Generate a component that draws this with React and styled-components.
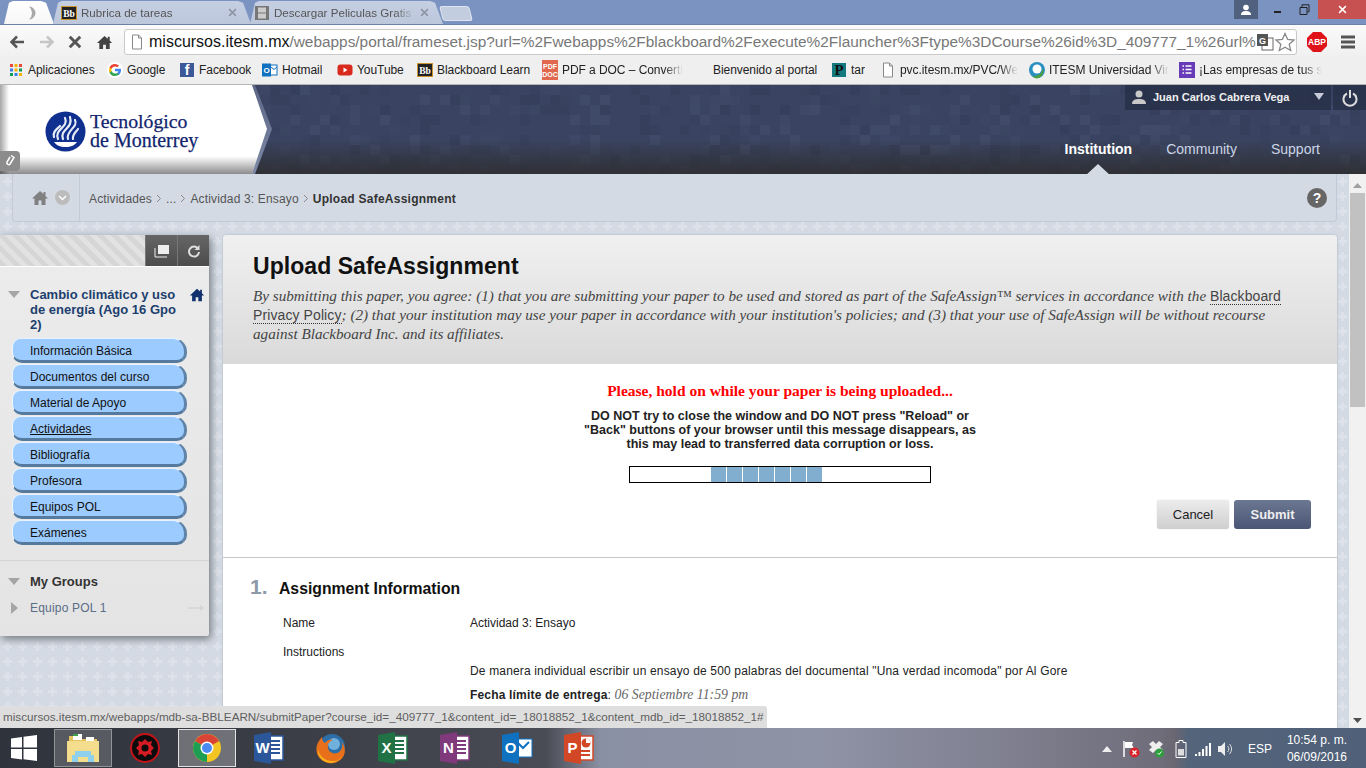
import React from "react";
import styled, { createGlobalStyle } from "styled-components";

const plusTile = (color) =>
  `url("data:image/svg+xml,%3Csvg xmlns='http://www.w3.org/2000/svg' width='15' height='15'%3E%3Cpath d='M6 3h3v3h3v3H9v3H6V9H3V6h3z' fill='${color}'/%3E%3C/svg%3E")`;

const GlobalStyle = createGlobalStyle`
  html, body {
    margin: 0;
    padding: 0;
    height: 100%;
    overflow: hidden;
    background: #d3dae4;
  }
  body, button {
    font-family: "Liberation Sans", Arial, sans-serif;
  }
  * {
    box-sizing: border-box;
  }
  svg {
    flex: none;
  }
`;

const Screen = styled.div`
  width: 1366px;
  height: 768px;
  display: flex;
  flex-direction: column;
  position: relative;
  overflow: hidden;
`;

/* ---------- browser chrome ---------- */

const TabStrip = styled.div`
  height: 25px;
  background: #7b93c1;
  display: flex;
  align-items: flex-end;
  padding-left: 4px;
  border-bottom: 1px solid #6c7fa6;
  flex: none;
`;

const Tab = styled.div`
  height: 23px;
  width: ${(p) => p.$w}px;
  flex: none;
  display: flex;
  align-items: center;
  gap: 4px;
  padding-left: ${(p) => p.$pad}px;
  padding-right: ${(p) => (p.$active ? 0 : 14)}px;
  background: ${(p) => (p.$active ? "linear-gradient(#fff,#f6f6f6)" : "linear-gradient(#c6cfe2,#bcc7dc)")};
  clip-path: polygon(0 100%, 5px 8%, 9px 0, calc(100% - 13px) 0, calc(100% - 8px) 8%, 100% 100%);
  font-size: 11.6px;
  color: #555;
  margin-right: -1px;
  white-space: nowrap;
  overflow: hidden;
`;

const TabTitle = styled.span`
  flex: 1;
  overflow: hidden;
  -webkit-mask-image: linear-gradient(90deg, #000 85%, transparent);
  mask-image: linear-gradient(90deg, #000 85%, transparent);
`;

const TabClose = styled.span`
  display: flex;
  flex: none;
`;

const NewTab = styled.div`
  width: 30px;
  height: 15px;
  margin: 0 0 3px -1px;
  background: #c3cde0;
  border: 1px solid #dfe5f0;
  border-radius: 3px;
  transform: skewX(14deg);
`;

const WindowControls = styled.div`
  margin-left: auto;
  align-self: flex-start;
  display: flex;
  height: 19px;
`;

const WinButton = styled.div`
  width: ${(p) => p.$w}px;
  height: 19px;
  display: flex;
  align-items: center;
  justify-content: center;
  background: ${(p) => p.$bg || "transparent"};
  margin-right: ${(p) => p.$mr || 0}px;
`;

const Toolbar = styled.div`
  height: 32px;
  flex: none;
  background: linear-gradient(#fafafa, #f0f0f0);
  display: flex;
  align-items: center;
  padding: 2px 0 0 9px;
`;

const NavIcon = styled.div`
  width: ${(p) => p.$w}px;
  flex: none;
  display: flex;
  justify-content: flex-start;
  align-items: center;
`;

const AddressBar = styled.div`
  width: 1173px;
  height: 26px;
  background: #fff;
  border: 1px solid #c9c9c9;
  border-radius: 3px;
  display: flex;
  align-items: center;
  padding-left: 5px;
  flex: none;
  overflow: hidden;
`;

const Url = styled.div`
  flex: 1;
  margin-left: 5px;
  font-size: 15.4px;
  color: #777;
  white-space: nowrap;
  overflow: hidden;
  b {
    color: #111;
    font-weight: normal;
    font-size: 16px;
  }
`;

const ToolRight = styled.div`
  display: flex;
  align-items: center;
  margin-left: 10px;
  gap: 14px;
`;

const Bookmarks = styled.div`
  height: 28px;
  flex: none;
  background: #efefef;
  border-bottom: 1px solid #b5b5b5;
  display: flex;
  align-items: center;
  padding: 0 0 1px 8px;
`;

const Bookmark = styled.div`
  width: ${(p) => p.$w}px;
  flex: none;
  display: flex;
  align-items: center;
  gap: 4px;
  font-size: 12px;
  letter-spacing: -0.06px;
  color: #222;
  white-space: nowrap;
  overflow: hidden;
  span {
    overflow: hidden;
    ${(p) => p.$fade && "-webkit-mask-image: linear-gradient(90deg, #000 85%, transparent); mask-image: linear-gradient(90deg, #000 85%, transparent);"}
  }
`;

const BookmarkIcon = styled.div`
  width: 16px;
  height: 20px;
  flex: none;
  display: flex;
  align-items: center;
  justify-content: center;
`;

/* ---------- site header ---------- */

const SiteHeader = styled.header`
  height: 89px;
  flex: none;
  position: relative;
  display: flex;
  background: #3a4462;
  overflow: hidden;
`;

const Mosaic = styled.svg`
  position: absolute;
  inset: 0;
`;

const HeaderShade = styled.div`
  position: absolute;
  inset: 0;
  background: linear-gradient(rgba(40, 40, 40, 0) 60%, rgba(45, 45, 45, 0.85) 100%);
`;

const LogoPanel = styled.div`
  width: 272px;
  flex: none;
  position: relative;
  background: linear-gradient(#5c6886, #7d88a6);
  clip-path: polygon(0 0, 255px 0, 272px 44px, 255px 89px, 0 89px);
`;

const LogoInner = styled.div`
  width: 268px;
  height: 100%;
  clip-path: polygon(0 0, 252px 0, 267px 44px, 252px 89px, 0 89px);
  display: flex;
  align-items: center;
  gap: 4px;
  padding: 3px 0 0 45px;
  background:
    linear-gradient(rgba(0, 0, 0, 0) 80%, rgba(0, 0, 0, 0.45) 100%),
    linear-gradient(90deg, rgba(0, 0, 0, 0.35), rgba(0, 0, 0, 0) 9px),
    #fff;
`;

const LogoText = styled.div`
  font-family: "Liberation Serif", serif;
  color: #10246e;
  font-size: 19.8px;
  line-height: 19px;
  -webkit-text-stroke: 0.25px #10246e;
  div + div {
    font-size: 20px;
  }
`;

const LinkBadge = styled.div`
  position: absolute;
  left: 0;
  bottom: 3px;
  width: 20px;
  height: 20px;
  background: #8c8c8c;
  border-radius: 0 4px 4px 0;
  display: flex;
  align-items: center;
  justify-content: center;
`;

const HeaderRight = styled.div`
  flex: 1;
  position: relative;
  display: flex;
  flex-direction: column;
  align-items: flex-end;
`;

const UserStrip = styled.div`
  height: 25px;
  display: flex;
  color: #f0f0f0;
  font-size: 11px;
  font-weight: bold;
`;

const UserMenu = styled.div`
  width: 206px;
  display: flex;
  align-items: center;
  padding: 0 0 2px 6px;
  background: rgba(38, 46, 70, 0.75);
`;

const UserName = styled.span`
  margin-left: 6px;
  width: 161px;
`;

const PowerBox = styled.div`
  width: 33px;
  margin-left: 2px;
  padding-left: 9px;
  background: rgba(38, 46, 70, 0.75);
  display: flex;
  align-items: center;
`;

const TopNav = styled.nav`
  display: flex;
  margin-top: 31px;
  height: 33px;
  padding-right: 46px;
  gap: 34px;
`;

const NavLink = styled.a`
  position: relative;
  font-size: 14px;
  line-height: 17px;
  color: ${(p) => (p.$active ? "#fff" : "#ccd5e6")};
  font-weight: ${(p) => (p.$active ? "bold" : "normal")};
  ${(p) =>
    p.$active &&
    `&::after {
      content: "";
      position: absolute;
      left: 50%;
      bottom: -2px;
      margin-left: -13px;
      border: solid transparent;
      border-width: 0 13px 12px;
      border-bottom-color: #d3dae4;
    }`}
`;

/* ---------- page ---------- */

const PageRow = styled.div`
  flex: 1;
  display: flex;
  min-height: 0;
`;

const PageMain = styled.div`
  flex: 1;
  min-width: 0;
  background-color: #d3dae4;
  background-image: ${plusTile("%23dde2ea")};
  overflow: hidden;
  display: flex;
  flex-direction: column;
`;

const Breadcrumb = styled.div`
  height: 48px;
  flex: none;
  margin: 0 12px;
  background: #d3dae4;
  border: 1px solid #c2cad8;
  border-top: none;
  border-radius: 0 0 4px 4px;
  display: flex;
  align-items: center;
  font-size: 12px;
  color: #555;
  letter-spacing: 0.15px;
`;

const CrumbHome = styled.div`
  width: 67px;
  height: 100%;
  flex: none;
  border-right: 1px solid #c2cad8;
  display: flex;
  align-items: center;
  padding-left: 18px;
  gap: 6px;
`;

const ChevronDot = styled.div`
  width: 15px;
  height: 15px;
  border-radius: 50%;
  background: #bcbcbc;
  display: flex;
  align-items: center;
  justify-content: center;
`;

const Crumbs = styled.div`
  display: flex;
  align-items: center;
  gap: 4px;
  margin: 2px 0 0 9px;
  b {
    color: #333;
    letter-spacing: 0.25px;
  }
`;

const HelpDot = styled.div`
  margin-left: auto;
  margin-right: 9px;
  width: 20px;
  height: 20px;
  border-radius: 50%;
  background: #666;
  color: #fff;
  font-weight: bold;
  font-size: 14px;
  display: flex;
  align-items: center;
  justify-content: center;
`;

const Body = styled.div`
  display: flex;
  align-items: flex-start;
  padding: 13px 12px 0 0;
  gap: 14px;
  flex: 1;
  min-height: 0;
`;

/* ---------- course menu ---------- */

const Sidebar = styled.aside`
  width: 209px;
  flex: none;
  background: linear-gradient(#ececec, #e4e4e4);
  border-radius: 0 3px 3px 0;
  box-shadow: 2px 3px 8px rgba(0, 0, 0, 0.45);
`;

const SideTop = styled.div`
  height: 32px;
  display: flex;
  justify-content: flex-end;
  background: repeating-linear-gradient(45deg, #d6d6d6 0 5px, #e2e2e2 5px 10px);
  border-bottom: 1px solid #fff;
`;

const SideTool = styled.div`
  width: 32px;
  display: flex;
  align-items: center;
  justify-content: center;
  background: linear-gradient(#666, #4c4c4c);
  border-left: 1px solid #777;
`;

const SideSection = styled.div`
  padding: ${(p) => p.$pad};
  border-top: ${(p) => (p.$line ? "1px solid #d4d4d4" : "none")};
`;

const CourseHead = styled.div`
  display: flex;
  align-items: flex-start;
  padding: 20px 4px 0 8px;
`;

const CourseTitle = styled.div`
  flex: 1;
  margin-left: 10px;
  font-size: 13px;
  line-height: 15px;
  font-weight: bold;
  color: #1c3f6e;
`;

const Triangle = styled.div`
  width: 0;
  height: 0;
  flex: none;
  margin-top: ${(p) => p.$mt || 0}px;
  border-style: solid;
  border-color: transparent;
  ${(p) =>
    p.$right
      ? "border-width: 6px 0 6px 7px; border-left-color: #a5a5a5;"
      : "border-width: 7px 6px 0; border-top-color: #a5a5a5;"}
`;

const MenuList = styled.div`
  display: flex;
  flex-direction: column;
  gap: 1px;
  margin: 6px 0 0 12px;
  width: 175px;
`;

const MenuItem = styled.a`
  height: 25px;
  display: flex;
  align-items: center;
  padding: 2px 0 0 17px;
  font-size: 12px;
  color: #111;
  background: #9ccbff;
  border-radius: 9px 14px 10px 10px;
  border-top: 1px solid #e8f3ff;
  border-left: 1px solid #eef6ff;
  border-right: 3px solid #5f84a8;
  border-bottom: 3px solid #567a9e;
  text-decoration: ${(p) => (p.$current ? "underline" : "none")};
`;

const GroupHead = styled.div`
  display: flex;
  align-items: center;
  padding-left: 8px;
  font-size: 13px;
  font-weight: bold;
  color: #333;
  span {
    margin-left: 10px;
  }
`;

const GroupRow = styled.div`
  display: flex;
  align-items: center;
  margin-top: 12px;
  padding: 0 5px 0 11px;
  font-size: 12px;
  color: #5a6d86;
  letter-spacing: 0.2px;
  span {
    flex: 1;
    margin-left: 12px;
  }
`;

/* ---------- content panel ---------- */

const Panel = styled.main`
  flex: 1;
  min-width: 0;
  height: 500px;
  background: #fff;
  border-radius: 4px 4px 0 0;
  box-shadow: 0 0 2px rgba(0, 0, 0, 0.25);
`;

const PanelHead = styled.div`
  height: 129px;
  padding: 17px 30px 0;
  background: linear-gradient(#f0f0f0, #dadada);
  border-radius: 4px 4px 0 0;
`;

const PageTitle = styled.h1`
  margin: 0;
  font-size: 23px;
  letter-spacing: 0.05px;
  line-height: 29px;
  font-weight: bold;
  color: #111;
`;

const Legal = styled.p`
  margin: 5px 0 0;
  font-family: "Liberation Serif", serif;
  font-style: italic;
  font-size: 15.18px;
  line-height: 19px;
  color: #444;
  white-space: nowrap;
  a {
    font-family: "Liberation Sans", sans-serif;
    font-style: normal;
    font-size: 14px;
    line-height: 1;
    letter-spacing: 0.1px;
    border-bottom: 1px dotted #333;
  }
`;

const Uploading = styled.div`
  padding-top: 19px;
  height: 194px;
  border-bottom: 1px solid #c8c8c8;
  text-align: center;
`;

const HoldOn = styled.div`
  font-family: "Liberation Serif", serif;
  font-weight: bold;
  font-size: 15.5px;
  line-height: 16px;
  color: #f00;
`;

const Warning = styled.div`
  margin-top: 10px;
  font-size: 12.5px;
  line-height: 14px;
  font-weight: bold;
  color: #222;
`;

const Progress = styled.div`
  width: 302px;
  height: 17px;
  margin: 15px auto 0;
  background: #fff;
  border: 1px solid #000;
  display: flex;
  gap: 1px;
  padding-left: 81px;
`;

const ProgressCell = styled.div`
  width: 15px;
  height: 15px;
  background: #81aecf;
`;

const Actions = styled.div`
  display: flex;
  justify-content: flex-end;
  gap: 5px;
  margin-top: 17px;
  padding-right: 26px;
`;

const Button = styled.button`
  width: ${(p) => p.$w}px;
  height: 29px;
  padding: 0;
  border-radius: 3px;
  font-size: 13px;
  border: none;
  ${(p) =>
    p.$primary
      ? "background: linear-gradient(#6c7791,#4a5675); color: #eee; font-weight: bold;"
      : "background: linear-gradient(#ececec,#cfcfcf); color: #222; box-shadow: 0 0 1px #aaa;"}
`;

const Step = styled.section`
  padding: 16px 27px 0;
`;

const StepHead = styled.div`
  display: flex;
  align-items: baseline;
  color: #111;
  font-size: 15.75px;
  font-weight: bold;
  line-height: 26px;
  b {
    color: #8d99a8;
    font-size: 21px;
    width: 29px;
  }
`;

const InfoRow = styled.div`
  display: grid;
  grid-template-columns: 187px 1fr;
  padding-left: 33px;
  font-size: 12px;
  line-height: 14px;
  color: #222;
  margin-top: ${(p) => p.$mt}px;
  letter-spacing: ${(p) => p.$spacing || 0}px;
  em {
    font-family: "Liberation Serif", serif;
    color: #666;
    font-size: 13.8px;
    letter-spacing: 0;
  }
`;

/* ---------- scrollbar, status, taskbar ---------- */

const ScrollBar = styled.div`
  width: 17px;
  flex: none;
  background: #f1f1f1;
  display: flex;
  flex-direction: column;
  align-items: center;
  padding-top: 9px;
`;

const ScrollThumb = styled.div`
  width: 15px;
  height: 214px;
  margin-top: 5px;
  background: #c1c1c1;
`;

const ScrollDown = styled.div`
  display: flex;
  margin-top: auto;
  margin-bottom: 5px;
`;

const StatusBubble = styled.div`
  position: absolute;
  left: 0;
  top: 706px;
  width: 767px;
  height: 22px;
  background: #dedede;
  border-radius: 0 3px 0 0;
  padding: 4px 0 0 3px;
  font-size: 11.7px;
  line-height: 14px;
  color: #5e5e5e;
  white-space: nowrap;
`;

const Taskbar = styled.footer`
  height: 40px;
  flex: none;
  display: flex;
  align-items: center;
  color: #fff;
  background: linear-gradient(
    90deg,
    #2f333b 0,
    #3b3e46 22%,
    #4a4c55 40%,
    #8a90a3 44%,
    #8f93a6 60%,
    #7f7f8f 74%,
    #6f6d7a 85%,
    #6a6672 86%,
    #53647b 87%,
    #4f6078 100%
  );
`;

const StartSlot = styled.div`
  width: 54px;
  flex: none;
  display: flex;
  justify-content: center;
  padding-right: 6px;
`;

const TaskItem = styled.div`
  width: 58px;
  height: 38px;
  flex: none;
  margin-right: 4px;
  display: flex;
  align-items: center;
  justify-content: center;
  ${(p) =>
    p.$open &&
    `background: rgba(255,255,255,${p.$focus ? 0.28 : 0.18}); border: 1px solid rgba(255,255,255,${p.$focus ? 0.8 : 0.35});`}
`;

const Tray = styled.div`
  margin-left: auto;
  display: flex;
  align-items: center;
  padding: 2px 19px 0 0;
`;

const TraySlot = styled.div`
  width: ${(p) => p.$w}px;
  display: flex;
  justify-content: center;
  align-items: center;
  font-size: 12px;
`;

const Clock = styled.div`
  margin-left: 6px;
  font-size: 12px;
  line-height: 17px;
  text-align: center;
`;

/* ---------- icons ---------- */

const Bb = ({ size = 16 }) => (
  <svg width={size} height={size} viewBox="0 0 16 16">
    <rect x=".5" y="1.5" width="15" height="13" fill="#222" stroke="#c9952f" />
    <text x="8" y="11.5" fontSize="9.5" fontWeight="bold" fill="#fff" textAnchor="middle" fontFamily="Liberation Serif">
      Bb
    </text>
  </svg>
);

const FilmIcon = () => (
  <svg width="16" height="16" viewBox="0 0 16 16">
    <rect x="1" y="1" width="14" height="14" fill="#777" />
    <rect x="4" y="2.5" width="8" height="5" fill="#ccc" />
    <rect x="4" y="8.5" width="8" height="5" fill="#ccc" />
  </svg>
);

const PageIcon = ({ color = "#888" }) => (
  <svg width="14" height="16" viewBox="0 0 14 16">
    <path d="M2.5 1h6l3 3v11h-9z" fill="#fff" stroke={color} />
    <path d="M8.5 1v3h3" fill="none" stroke={color} />
  </svg>
);

const Apps = () => (
  <svg width="16" height="16" viewBox="0 0 16 16">
    {["#e8453c", "#f4b400", "#e8453c", "#3b7de9", "#f4b400", "#0f9d58", "#0f9d58", "#3b7de9", "#f4b400"].map((c, i) => (
      <rect key={i} x={2 + (i % 3) * 4.5} y={2 + Math.floor(i / 3) * 4.5} width="3" height="3" fill={c} />
    ))}
  </svg>
);

const GoogleG = () => (
  <svg width="16" height="16" viewBox="0 0 24 24">
    <circle cx="12" cy="12" r="12" fill="#fff" />
    <path d="M21 12.2c0-.7-.1-1.3-.2-1.9H12v3.6h5a4.3 4.3 0 0 1-1.900 2.800v2.300h3C20 17.300 21 15 21 12.200z" fill="#4285f4" />
    <path d="M12 21c2.500 0 4.500-.8 6.100-2.200l-3-2.300c-.8.600-1.900.9-3.100.9-2.400 0-4.400-1.600-5.100-3.800H3.800v2.400A9 9 0 0 0 12 21z" fill="#34a853" />
    <path d="M6.900 13.600a5.400 5.400 0 0 1 0-3.400V7.800H3.800a9 9 0 0 0 0 8.200z" fill="#fbbc05" />
    <path d="M12 6.600c1.300 0 2.500.5 3.400 1.300l2.600-2.600A9 9 0 0 0 3.800 7.800l3.100 2.400C7.600 8.100 9.600 6.600 12 6.600z" fill="#ea4335" />
  </svg>
);

const LetterBox = ({ bg, fg = "#fff", letter, fs = 12, font = "Liberation Sans" }) => (
  <svg width="16" height="16" viewBox="0 0 16 16">
    <rect x="1" y="1" width="14" height="14" fill={bg} />
    <text x="8" y="12.5" fontSize={fs} fontWeight="bold" fill={fg} textAnchor="middle" fontFamily={font}>
      {letter}
    </text>
  </svg>
);

const OutlookSmall = () => (
  <svg width="16" height="16" viewBox="0 0 16 16">
    <rect x="5" y="3" width="10" height="10" fill="#fff" stroke="#0f71c0" />
    <rect x="0" y="1.5" width="9" height="13" fill="#0f71c0" />
    <text x="4.5" y="11" fontSize="8" fontWeight="bold" fill="#fff" textAnchor="middle">
      O
    </text>
    <path d="M9 5l3 2.5L15 5" stroke="#0f71c0" fill="none" />
  </svg>
);

const YouTubeIcon = () => (
  <svg width="16" height="16" viewBox="0 0 16 16">
    <rect x="0.5" y="2.5" width="15" height="11" rx="3" fill="#d8291c" />
    <path d="M6.500 5.500v5l4-2.500z" fill="#fff" />
  </svg>
);

const PdfDoc = () => (
  <svg width="16" height="20" viewBox="0 0 16 20">
    <rect width="16" height="20" fill="#e1684f" />
    <text x="8" y="8.5" fontSize="7" fontWeight="bold" fill="#fff" textAnchor="middle">
      PDF
    </text>
    <text x="8" y="17" fontSize="7" fontWeight="bold" fill="#fff" textAnchor="middle">
      DOC
    </text>
  </svg>
);

const ItesmIcon = () => (
  <svg width="16" height="18" viewBox="0 0 16 18">
    <circle cx="8" cy="9" r="8" fill="#2a8fc0" />
    <path d="M3 15c5 1 10-2 11-8 1 4 0 8-4 10-3 1-5 0-7-2z" fill="#4aa03f" />
    <circle cx="8" cy="8" r="4.5" fill="#fff" />
  </svg>
);

const FormsIcon = () => (
  <svg width="16" height="16" viewBox="0 0 16 16">
    <rect width="16" height="16" fill="#673ab7" />
    {[4, 7.5, 11].map((y) => (
      <path key={y} d={`M3.5 ${y}h1.5M6.5 ${y}h6`} stroke="#fff" strokeWidth="1.6" />
    ))}
  </svg>
);

const Home = ({ color, size = 18 }) => (
  <svg width={size} height={size} viewBox="0 0 18 18">
    <path d="M9 2L1 9.500h2.500V16H7.500v-4.500h3V16h4V9.500H17L14.500 7V3H12.500v2z" fill={color} />
  </svg>
);

const LogoMark = () => (
  <svg width="41" height="41" viewBox="0 0 41 41">
    <circle cx="20.5" cy="20.5" r="20" fill="#10308f" />
    <g fill="none" stroke="#e4eaf6" strokeWidth="2.2" strokeLinecap="round">
      <path d="M9 26c-2-5 3-8 6-11" />
      <path d="M13 28c-3-7 4-10 7-15 1-2 1-4 0-6" />
      <path d="M18 28c-3-7 5-10 7-15 1-3 1-4 0-7" />
      <path d="M23 28c-2-6 5-10 7-14 1-2 1-3 0-5" />
      <path d="M28 28c-1-4 3-7 5-10" />
    </g>
    <path d="M9 31h23c-2 3-6 5-11.500 5S11 34 9 31z" fill="#fff" />
  </svg>
);

const Spinner = () => (
  <svg width="16" height="16" viewBox="0 0 16 16">
    <path d="M6 1.500a6.500 6.500 0 0 1 0 13 8.500 8.500 0 0 0 0-13z" fill="#a9a9a9" />
  </svg>
);

const Cross = ({ size = 12, color = "#555", width = 2 }) => (
  <svg width={size} height={size} viewBox="0 0 12 12">
    <path d="M1.500 1.500l9 9M10.500 1.500l-9 9" stroke={color} strokeWidth={width} />
  </svg>
);

const CrumbArrow = () => (
  <svg width="6" height="9" viewBox="0 0 6 9">
    <path d="M1 1l3.500 3.500L1 8" fill="none" stroke="#888" />
  </svg>
);

const ChromeLogo = () => (
  <svg width="30" height="30" viewBox="0 0 30 30">
    <circle cx="15" cy="15" r="14" fill="#f2c522" />
    <path d="M15 15L2.900 8A14 14 0 0 1 27.100 8z" fill="#da4437" />
    <path d="M15 15L15 29A14 14 0 0 1 2.900 8z" fill="#1e9e54" />
    <circle cx="15" cy="15" r="6.500" fill="#fff" />
    <circle cx="15" cy="15" r="5" fill="#4a8af4" />
  </svg>
);

const OfficeIcon = ({ bg, letter }) => (
  <svg width="32" height="34" viewBox="0 0 32 34">
    <rect x="13" y="5" width="17" height="24" fill="#fff" stroke={bg} strokeWidth="1.5" />
    {[10, 14, 18, 22].map((y) => (
      <path key={y} d={`M16 ${y}h11`} stroke={bg} strokeWidth="2" />
    ))}
    <path d="M1 4l17-3v32L1 30z" fill={bg} />
    <text x="9.5" y="22" fontSize="15" fontWeight="bold" fill="#fff" textAnchor="middle">
      {letter}
    </text>
  </svg>
);

const OutlookBig = () => (
  <svg width="32" height="34" viewBox="0 0 32 34">
    <rect x="13" y="8" width="18" height="18" fill="#fff" stroke="#0f71c0" />
    <path d="M16 11l6 6 6-6" stroke="#0f71c0" strokeWidth="2" fill="none" />
    <path d="M1 4l17-3v32L1 30z" fill="#0f71c0" />
    <text x="9.5" y="22" fontSize="15" fontWeight="bold" fill="#fff" textAnchor="middle">
      O
    </text>
  </svg>
);

const PowerPointIcon = () => (
  <svg width="32" height="34" viewBox="0 0 32 34">
    <rect x="13" y="5" width="17" height="24" fill="#fff" stroke="#d24726" strokeWidth="1.5" />
    <circle cx="23" cy="12" r="4.500" fill="#d24726" />
    <path d="M23 12V7.500A4.500 4.500 0 0 1 27.500 12z" fill="#fff" />
    <path d="M17 20h10M17 24h10" stroke="#d24726" strokeWidth="2" />
    <path d="M1 4l17-3v32L1 30z" fill="#d24726" />
    <text x="9.5" y="22" fontSize="15" fontWeight="bold" fill="#fff" textAnchor="middle">
      P
    </text>
  </svg>
);

const FolderIcon = () => (
  <svg width="34" height="34" viewBox="0 0 34 34">
    <path d="M3 5h10l3 3h15v8H3z" fill="#e4c25f" />
    <path d="M7 3h9v6H7z" fill="#fff" />
    <path d="M7 3h5v2H7z" fill="#3ea04a" />
    <path d="M20 6h8v4h-8z" fill="#fff" />
    <path d="M1 10h32v21H1z" fill="#f5dd8e" />
    <path d="M9 20h16v4h3v7h-6v-5H12v5H6v-7h3z" fill="#8fd0ec" />
  </svg>
);

const RedDiscIcon = () => (
  <svg width="30" height="30" viewBox="0 0 30 30">
    <circle cx="15" cy="15" r="14" fill="#0c0c0c" stroke="#c3141c" strokeWidth="2" />
    <path d="M15 6l3 3 4-1-1 4 3 3-3 3 1 4-4-1-3 3-3-3-4 1 1-4-3-3 3-3-1-4 4 1z" fill="#d51c24" />
    <circle cx="15" cy="15" r="3.5" fill="#0c0c0c" />
  </svg>
);

const FirefoxIcon = () => (
  <svg width="32" height="32" viewBox="0 0 32 32">
    <circle cx="17" cy="15" r="13" fill="#2c6ea5" />
    <circle cx="19" cy="12" r="6" fill="#6fb0dd" />
    <path d="M7 5c0 3 1 5 3 6 2-3 5-4 8-3-3 1-6 4-5 8 1 5 7 7 11 4 3-2 4-6 3-10 3 4 4 10 1 15-4 6-12 8-18 5C3 27 0 20 2 13c1-3 3-6 5-8z" fill="#e8701a" />
    <path d="M3 17c1 7 8 13 16 12 3 0 6-2 8-5-3 6-10 8-16 6-5-2-9-7-8-13z" fill="#f7b21d" />
  </svg>
);

const WinLogo = () => (
  <svg width="28" height="28" viewBox="0 0 28 28">
    <path d="M1 4.500l11-1.500v10.500H1zM13.500 2.800L27 1v12.500H13.500zM1 15h11v10.500L1 24zM13.500 15H27v12l-13.500-1.800z" fill="#fff" />
  </svg>
);

// deterministic mosaic so that the header looks the same on every load
const mosaicCells = [];
let seed = 7;
for (let y = 0; y < 9; y++) {
  for (let x = 0; x < 137; x++) {
    seed = (seed * 16807) % 2147483647;
    const v = seed % 100;
    if (v > 55) {
      const dark = v < 78;
      const alpha = ((v % 10) + 2) / (dark ? 80 : 130);
      mosaicCells.push({ x: x * 10, y: y * 10, fill: dark ? "#1c2338" : "#8e9ab8", alpha });
    }
  }
}

const bookmarks = [
  { w: 99, icon: <Apps />, label: "Aplicaciones" },
  { w: 72, icon: <GoogleG />, label: "Google" },
  { w: 83, icon: <LetterBox bg="#3b5998" letter="f" fs={14} />, label: "Facebook" },
  { w: 75, icon: <OutlookSmall />, label: "Hotmail" },
  { w: 80, icon: <YouTubeIcon />, label: "YouTube" },
  { w: 125, icon: <Bb />, label: "Blackboard Learn" },
  { w: 151, icon: <PdfDoc />, label: "PDF a DOC – Converti", fade: true },
  { w: 138, icon: null, label: "Bienvenido al portal" },
  { w: 49, icon: <LetterBox bg="#137a80" fg="#111" letter="P" font="Liberation Serif" fs={15} />, label: "tar" },
  { w: 149, icon: <PageIcon />, label: "pvc.itesm.mx/PVC/We", fade: true },
  { w: 150, icon: <ItesmIcon />, label: "ITESM Universidad Vir", fade: true },
  { w: 160, icon: <FormsIcon />, label: "¡Las empresas de tus s", fade: true },
];

const menuItems = [
  "Información Básica",
  "Documentos del curso",
  "Material de Apoyo",
  "Actividades",
  "Bibliografía",
  "Profesora",
  "Equipos POL",
  "Exámenes",
];

const arrowStroke = { fill: "none", strokeWidth: 2.5 };

export default function App() {
  return (
    <Screen>
      <GlobalStyle />

      <TabStrip>
        <Tab $w={50} $pad={19} $active>
          <Spinner />
        </Tab>
        <Tab $w={198} $pad={8}>
          <Bb />
          <TabTitle>Rubrica de tareas</TabTitle>
          <TabClose>
            <Cross size={9} color="#8c93a3" />
          </TabClose>
        </Tab>
        <Tab $w={193} $pad={4}>
          <FilmIcon />
          <TabTitle>Descargar Peliculas Gratis</TabTitle>
          <TabClose>
            <Cross size={9} color="#8c93a3" />
          </TabClose>
        </Tab>
        <NewTab />
        <WindowControls>
          <WinButton $w={24} $bg="#50607f" $mr={6}>
            <svg width="12" height="12" viewBox="0 0 12 12">
              <circle cx="6" cy="3.5" r="2.8" fill="#fff" />
              <path d="M1 11c0-3 2-4 5-4s5 1 5 4z" fill="#fff" />
            </svg>
          </WinButton>
          <WinButton $w={27}>
            <svg width="9" height="9" viewBox="0 0 9 9">
              <rect x="1" y="6" width="7" height="2" fill="#222" />
            </svg>
          </WinButton>
          <WinButton $w={27}>
            <svg width="11" height="11" viewBox="0 0 11 11">
              <path d="M1 3.500h7v7H1zM3 3V.8h7v7H8.500" fill="none" stroke="#222" />
            </svg>
          </WinButton>
          <WinButton $w={48} $bg="#c75050">
            <Cross size={9} color="#fff" />
          </WinButton>
        </WindowControls>
      </TabStrip>

      <Toolbar>
        <NavIcon $w={30}>
          <svg width="16" height="16" viewBox="0 0 16 16">
            <path d="M15 8H3M8 2.500L2.500 8 8 13.500" stroke="#555" {...arrowStroke} />
          </svg>
        </NavIcon>
        <NavIcon $w={29}>
          <svg width="16" height="16" viewBox="0 0 16 16">
            <path d="M1 8h12M8 2.500L13.500 8 8 13.500" stroke="#c5c5c5" {...arrowStroke} />
          </svg>
        </NavIcon>
        <NavIcon $w={28}>
          <Cross size={14} color="#555" width={2.5} />
        </NavIcon>
        <NavIcon $w={28}>
          <Home color="#444" size={17} />
        </NavIcon>
        <AddressBar>
          <PageIcon />
          <Url>
            <b>miscursos.itesm.mx</b>/webapps/portal/frameset.jsp?url=%2Fwebapps%2Fblackboard%2Fexecute%2Flauncher%3Ftype%3DCourse%26id%3D_409777_1%26url%
          </Url>
          <svg width="18" height="18" viewBox="0 0 18 18">
            <rect x="6" y="5" width="11" height="12" fill="#fff" stroke="#666" />
            <rect x="1" y="1" width="11" height="12" fill="#555" />
            <text x="6.5" y="10.5" fontSize="9" fontWeight="bold" fill="#fff" textAnchor="middle">
              G
            </text>
          </svg>
          <svg width="22" height="20" viewBox="0 0 22 20">
            <path d="M11 1.500l2.700 6 6.300.6-4.800 4.200 1.500 6.200-5.700-3.300-5.700 3.300 1.500-6.200L2 8.100l6.300-.6z" fill="none" stroke="#888" strokeWidth="1.3" />
          </svg>
        </AddressBar>
        <ToolRight>
          <svg width="20" height="20" viewBox="0 0 20 20">
            <path d="M6 0h8l6 6v8l-6 6H6l-6-6V6z" fill="#e0121a" />
            <text x="10" y="13" fontSize="8.5" fontWeight="bold" fill="#fff" textAnchor="middle">
              ABP
            </text>
          </svg>
          <svg width="14" height="14" viewBox="0 0 14 14">
            <path d="M0 2h14M0 7h14M0 12h14" stroke="#555" strokeWidth="3" />
          </svg>
        </ToolRight>
      </Toolbar>

      <Bookmarks>
        {bookmarks.map((b) => (
          <Bookmark key={b.label} $w={b.w} $fade={b.fade}>
            <BookmarkIcon>{b.icon}</BookmarkIcon>
            <span>{b.label}</span>
          </Bookmark>
        ))}
      </Bookmarks>

      <SiteHeader>
        <Mosaic width="1366" height="89">
          {mosaicCells.map((c, i) => (
            <rect key={i} x={c.x} y={c.y} width="10" height="10" fill={c.fill} opacity={c.alpha} />
          ))}
        </Mosaic>
        <HeaderShade />
        <LogoPanel>
          <LogoInner>
            <LogoMark />
            <LogoText>
              <div>Tecnológico</div>
              <div>de Monterrey</div>
            </LogoText>
          </LogoInner>
          <LinkBadge>
            <svg width="12" height="14" viewBox="0 0 12 14">
              <path d="M7 1.500l3 2-4 6.500c-1 1.500-4 0-3-2l3-5" fill="none" stroke="#fff" strokeWidth="1.5" />
            </svg>
          </LinkBadge>
        </LogoPanel>
        <HeaderRight>
          <UserStrip>
            <UserMenu>
              <svg width="16" height="16" viewBox="0 0 16 16">
                <circle cx="8" cy="5" r="3.5" fill="#c8c8c8" />
                <path d="M1 15c0-4 3-5 7-5s7 1 7 5z" fill="#c8c8c8" />
              </svg>
              <UserName>Juan Carlos Cabrera Vega</UserName>
              <svg width="10" height="7" viewBox="0 0 10 7">
                <path d="M0 0h10L5 7z" fill="#c8ccd6" />
              </svg>
            </UserMenu>
            <PowerBox>
              <svg width="16" height="18" viewBox="0 0 16 18">
                <path d="M5 4.500a6.500 6.500 0 1 0 6 0M8 1v8" fill="none" stroke="#ddd" strokeWidth="2" />
              </svg>
            </PowerBox>
          </UserStrip>
          <TopNav>
            <NavLink $active>Institution</NavLink>
            <NavLink>Community</NavLink>
            <NavLink>Support</NavLink>
          </TopNav>
        </HeaderRight>
      </SiteHeader>

      <PageRow>
        <PageMain>
          <Breadcrumb>
            <CrumbHome>
              <Home color="#808080" />
              <ChevronDot>
                <svg width="9" height="6" viewBox="0 0 9 6">
                  <path d="M1 1l3.500 3.500L8 1" fill="none" stroke="#fff" strokeWidth="1.5" />
                </svg>
              </ChevronDot>
            </CrumbHome>
            <Crumbs>
              <span>Actividades</span>
              <CrumbArrow />
              <span>...</span>
              <CrumbArrow />
              <span>Actividad 3: Ensayo</span>
              <CrumbArrow />
              <b>Upload SafeAssignment</b>
            </Crumbs>
            <HelpDot>?</HelpDot>
          </Breadcrumb>

          <Body>
            <Sidebar>
              <SideTop>
                <SideTool>
                  <svg width="16" height="14" viewBox="0 0 16 14">
                    <path d="M4 1h11v9H4z" fill="#eee" />
                    <path d="M1 4v9h12" fill="none" stroke="#eee" />
                  </svg>
                </SideTool>
                <SideTool>
                  <svg width="14" height="14" viewBox="0 0 14 14">
                    <path d="M11 4.500A5 5 0 1 0 12 8" fill="none" stroke="#ddd" strokeWidth="2" />
                    <path d="M12.500 1v5h-5z" fill="#ddd" />
                  </svg>
                </SideTool>
              </SideTop>
              <SideSection $pad="0 0 15px">
                <CourseHead>
                  <Triangle $mt={4} />
                  <CourseTitle>Cambio climático y uso de energía (Ago 16 Gpo 2)</CourseTitle>
                  <Home color="#10306e" size={16} />
                </CourseHead>
                <MenuList>
                  {menuItems.map((item) => (
                    <MenuItem key={item} $current={item === "Actividades"}>
                      {item}
                    </MenuItem>
                  ))}
                </MenuList>
              </SideSection>
              <SideSection $pad="13px 0 21px" $line>
                <GroupHead>
                  <Triangle />
                  <span>My Groups</span>
                </GroupHead>
                <GroupRow>
                  <Triangle $right />
                  <span>Equipo POL 1</span>
                  <svg width="16" height="6" viewBox="0 0 16 6">
                    <path d="M0 3h15M12 .5L15 3l-3 2.500" fill="none" stroke="#ccc" />
                  </svg>
                </GroupRow>
              </SideSection>
            </Sidebar>

            <Panel>
              <PanelHead>
                <PageTitle>Upload SafeAssignment</PageTitle>
                <Legal>
                  By submitting this paper, you agree: (1) that you are submitting your paper to be used and stored as part of the SafeAssign™ services in accordance with the <a>Blackboard</a>
                  <br />
                  <a>Privacy Policy</a>; (2) that your institution may use your paper in accordance with your institution's policies; and (3) that your use of SafeAssign will be without recourse
                  <br />
                  against Blackboard Inc. and its affiliates.
                </Legal>
              </PanelHead>
              <Uploading>
                <HoldOn>Please, hold on while your paper is being uploaded...</HoldOn>
                <Warning>
                  DO NOT try to close the window and DO NOT press "Reload" or
                  <br />
                  "Back" buttons of your browser until this message disappears, as
                  <br />
                  this may lead to transferred data corruption or loss.
                </Warning>
                <Progress>
                  {Array.from({ length: 7 }, (_, i) => (
                    <ProgressCell key={i} />
                  ))}
                </Progress>
                <Actions>
                  <Button $w={72}>Cancel</Button>
                  <Button $w={77} $primary>
                    Submit
                  </Button>
                </Actions>
              </Uploading>
              <Step>
                <StepHead>
                  <b>1.</b>
                  Assignment Information
                </StepHead>
                <InfoRow $mt={14}>
                  <span>Name</span>
                  <span>Actividad 3: Ensayo</span>
                </InfoRow>
                <InfoRow $mt={15}>
                  <span>Instructions</span>
                  <span />
                </InfoRow>
                <InfoRow $mt={5} $spacing={0.16}>
                  <span />
                  <span>De manera individual escribir un ensayo de 500 palabras del documental "Una verdad incomoda" por Al Gore</span>
                </InfoRow>
                <InfoRow $mt={10} $spacing={0.18}>
                  <span />
                  <span>
                    <b>Fecha límite de entrega</b>: <em>06 Septiembre 11:59 pm</em>
                  </span>
                </InfoRow>
              </Step>
            </Panel>
          </Body>
        </PageMain>
        <ScrollBar>
          <svg width="9" height="5" viewBox="0 0 9 5">
            <path d="M4.500 0L9 5H0z" fill="#a0a0a0" />
          </svg>
          <ScrollThumb />
          <ScrollDown>
            <svg width="9" height="5" viewBox="0 0 9 5">
              <path d="M0 0h9L4.500 5z" fill="#505050" />
            </svg>
          </ScrollDown>
        </ScrollBar>
      </PageRow>

      <StatusBubble>miscursos.itesm.mx/webapps/mdb-sa-BBLEARN/submitPaper?course_id=_409777_1&amp;content_id=_18018852_1&amp;content_mdb_id=_18018852_1#</StatusBubble>

      <Taskbar>
        <StartSlot>
          <WinLogo />
        </StartSlot>
        <TaskItem $open>
          <FolderIcon />
        </TaskItem>
        <TaskItem>
          <RedDiscIcon />
        </TaskItem>
        <TaskItem $open $focus>
          <ChromeLogo />
        </TaskItem>
        <TaskItem>
          <OfficeIcon bg="#2b579a" letter="W" />
        </TaskItem>
        <TaskItem>
          <FirefoxIcon />
        </TaskItem>
        <TaskItem>
          <OfficeIcon bg="#207245" letter="X" />
        </TaskItem>
        <TaskItem>
          <OfficeIcon bg="#80397b" letter="N" />
        </TaskItem>
        <TaskItem>
          <OutlookBig />
        </TaskItem>
        <TaskItem>
          <PowerPointIcon />
        </TaskItem>
        <Tray>
          <TraySlot $w={22}>
            <svg width="10" height="6" viewBox="0 0 10 6">
              <path d="M5 0l5 6H0z" fill="#eee" />
            </svg>
          </TraySlot>
          <TraySlot $w={26}>
            <svg width="18" height="18" viewBox="0 0 18 18">
              <path d="M2 1v16" stroke="#fff" strokeWidth="1.5" />
              <path d="M3 2h8l-1 3 2 3H3z" fill="#fff" />
              <circle cx="12.5" cy="12.5" r="5" fill="#d9222a" />
              <path d="M10.500 10.500l4 4M14.500 10.500l-4 4" stroke="#fff" strokeWidth="1.3" />
            </svg>
          </TraySlot>
          <TraySlot $w={25}>
            <svg width="18" height="18" viewBox="0 0 18 18">
              <path d="M2 4l4-3 3 3 3-3 4 3-3 3 3 3-4 3-3-3-3 3-4-3 3-3z" fill="#eee" />
              <circle cx="12.5" cy="13" r="4.500" fill="#2e9e3e" />
              <path d="M10.500 13l1.500 1.500 2.500-3" stroke="#fff" fill="none" />
            </svg>
          </TraySlot>
          <TraySlot $w={24}>
            <svg width="12" height="18" viewBox="0 0 12 18">
              <path d="M4 .5h4v2h3v15H1v-15h3z" fill="none" stroke="#fff" />
              <rect x="3" y="9" width="6" height="6.5" fill="#ddd" />
            </svg>
          </TraySlot>
          <TraySlot $w={20}>
            <svg width="16" height="14" viewBox="0 0 16 14">
              <path d="M0 12h2v2H0zM3.500 10h2v4h-2zM7 7h2v7H7zM10.500 4h2v10h-2zM14 1h2v13h-2z" fill="#fff" />
            </svg>
          </TraySlot>
          <TraySlot $w={26}>
            <svg width="16" height="14" viewBox="0 0 16 14">
              <path d="M0 4h3l4-4v14l-4-4H0z" fill="#eee" />
              <path d="M9.500 4a4 4 0 0 1 0 6M11.500 2a7 7 0 0 1 0 10" fill="none" stroke="#ddd" />
            </svg>
          </TraySlot>
          <TraySlot $w={42}>ESP</TraySlot>
          <Clock>
            10:54 p. m.
            <br />
            06/09/2016
          </Clock>
        </Tray>
      </Taskbar>
    </Screen>
  );
}
